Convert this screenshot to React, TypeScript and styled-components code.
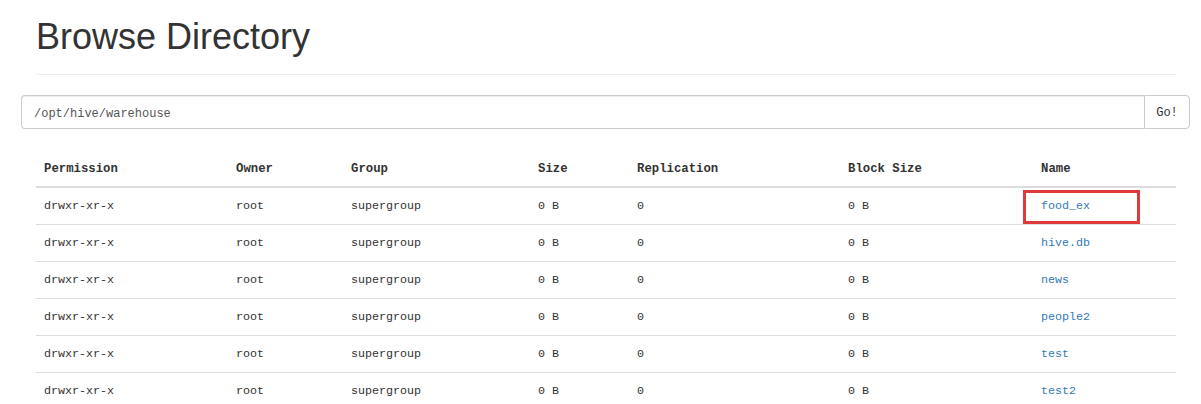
import React from "react"
import styled, { createGlobalStyle } from "styled-components"

const GlobalStyle = createGlobalStyle`
  body {
    margin: 0;
    background: #fff;
    color: #333;
    font-family: "Liberation Sans", Arial, sans-serif;
  }
`

type Entry = { name: string; highlight?: boolean }

const entries: Entry[] = [
  { name: "food_ex", highlight: true },
  { name: "hive.db" },
  { name: "news" },
  { name: "people2" },
  { name: "test" },
  { name: "test2" },
]

const columns = [
  { label: "Permission", width: 192 },
  { label: "Owner", width: 115 },
  { label: "Group", width: 187 },
  { label: "Size", width: 99 },
  { label: "Replication", width: 211 },
  { label: "Block Size", width: 193 },
  { label: "Name", width: 143 },
]

export default function App() {
  return (
    <>
      <GlobalStyle />
      <Page>
        <PageHeader>
          <Title>Browse Directory</Title>
        </PageHeader>
        <InputGroup>
          <PathInput defaultValue="/opt/hive/warehouse" />
          <GoButton>Go!</GoButton>
        </InputGroup>
        <Table>
          <colgroup>
            {columns.map((c) => (
              <col key={c.label} style={{ width: c.width }} />
            ))}
          </colgroup>
          <thead>
            <tr>
              {columns.map((c) => (
                <Th key={c.label}>{c.label}</Th>
              ))}
            </tr>
          </thead>
          <tbody>
            {entries.map((e) => (
              <tr key={e.name}>
                <Td>drwxr-xr-x</Td>
                <Td>root</Td>
                <Td>supergroup</Td>
                <Td>0 B</Td>
                <Td>0</Td>
                <Td>0 B</Td>
                <NameCell>
                  <FileLink href="#">{e.name}</FileLink>
                  {e.highlight && <Highlight />}
                </NameCell>
              </tr>
            ))}
          </tbody>
        </Table>
      </Page>
    </>
  )
}

const Page = styled.div`
  width: 1201px;
  height: 404px;
  overflow: hidden;
`

const PageHeader = styled.div`
  margin: 0 25px 0 36px;
  padding: 17px 0 17px;
  border-bottom: 1px solid #eee;
`

const Title = styled.h1`
  margin: 0;
  font-size: 36px;
  line-height: 40px;
  font-weight: 400;
  color: #333;
`

const InputGroup = styled.div`
  display: flex;
  margin: 20px 11px 0 21px;
  height: 34px;
`

const PathInput = styled.input`
  flex: 1;
  box-sizing: border-box;
  height: 34px;
  padding: 3px 12px 0;
  border: 1px solid #ccc;
  border-right: none;
  border-radius: 4px 0 0 4px;
  font-family: "Liberation Mono", monospace;
  font-size: 12px;
  color: #555;
  outline: none;
  box-shadow: inset 0 1px 1px rgba(0, 0, 0, 0.075);
`

const GoButton = styled.button`
  width: 46px;
  height: 34px;
  box-sizing: border-box;
  border: 1px solid #ccc;
  border-radius: 0 4px 4px 0;
  background: #fff;
  font-family: "Liberation Mono", monospace;
  font-size: 12px;
  color: #333;
  padding: 2px 0 0;
`

const Table = styled.table`
  margin: 21px 0 0 36px;
  width: 1140px;
  table-layout: fixed;
  border-collapse: collapse;
  border-spacing: 0;
`

const Th = styled.th`
  text-align: left;
  padding: 9px 8px 7px;
  line-height: 20px;
  font-family: "Liberation Mono", monospace;
  font-size: 12.3px;
  font-weight: 700;
  color: #333;
  border-bottom: 2px solid #ddd;
`

const Td = styled.td`
  padding: 8px;
  line-height: 20px;
  font-family: "Liberation Mono", monospace;
  font-size: 11.7px;
  color: #333;
  border-top: 1px solid #ddd;
  white-space: nowrap;
`

const NameCell = styled(Td)`
  position: relative;
`

const FileLink = styled.a`
  color: #337ab7;
  text-decoration: none;
`

const Highlight = styled.span`
  position: absolute;
  left: -10px;
  top: 2px;
  width: 117px;
  height: 34px;
  box-sizing: border-box;
  border: 3px solid #e0393b;
  pointer-events: none;
`
